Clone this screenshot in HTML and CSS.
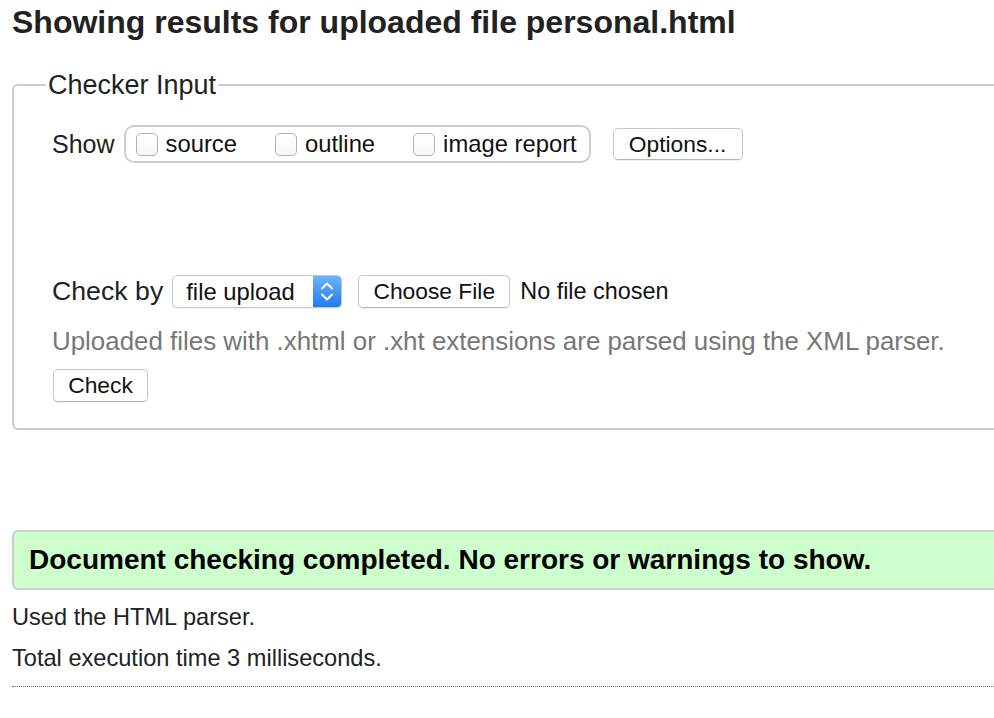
FILE: index.html
```html
<!DOCTYPE html>
<html lang="en">
<head>
<meta charset="utf-8">
<title>Checker results</title>
<link rel="stylesheet" href="styles.css">
</head>
<body>
<div class="page">
  <h1 class="title">Showing results for uploaded file personal.html</h1>

  <fieldset class="checker">
    <legend class="checker-legend">Checker Input</legend>

    <div class="show-row">
      <span class="row-label show-label">Show</span>
      <div class="show-group">
        <label class="opt"><input type="checkbox" class="cb"><span>source</span></label>
        <label class="opt"><input type="checkbox" class="cb"><span>outline</span></label>
        <label class="opt"><input type="checkbox" class="cb"><span>image report</span></label>
      </div>
      <button type="button" class="btn btn-options">Options...</button>
    </div>

    <div class="checkby-row">
      <span class="row-label checkby-label">Check by</span>
      <div class="select">
        <span class="select-text">file upload</span>
        <span class="select-stepper">
          <svg width="28" height="33" viewBox="0 0 28 33" aria-hidden="true">
            <path d="M9 13.5 L14 8.5 L19 13.5" fill="none" stroke="#fff" stroke-width="2" stroke-linecap="round" stroke-linejoin="round"/>
            <path d="M9 19.5 L14 24.5 L19 19.5" fill="none" stroke="#fff" stroke-width="2" stroke-linecap="round" stroke-linejoin="round"/>
          </svg>
        </span>
      </div>
      <button type="button" class="btn btn-file">Choose File</button>
      <span class="file-status">No file chosen</span>
    </div>

    <p class="hint">Uploaded files with .xhtml or .xht extensions are parsed using the XML parser.</p>

    <button type="button" class="btn btn-check">Check</button>
  </fieldset>

  <div class="success">Document checking completed. No errors or warnings to show.</div>

  <p class="stat stat-first">Used the HTML parser.</p>
  <p class="stat">Total execution time 3 milliseconds.</p>

  <hr class="rule">
</div>
</body>
</html>
```

FILE: styles.css
```css
html {
  overflow: hidden;
  background: #fff;
}

body {
  margin: 0;
  padding: 0 0 0 12px;
  font-family: "Liberation Sans", Arial, Helvetica, sans-serif;
  color: #222;
}

.page {
  width: 1020px;
}

.title {
  margin: 0;
  padding-top: 2px;
  font-size: 32px;
  line-height: 40px;
  font-weight: bold;
  color: #222;
}

.checker {
  margin: 28px 0 0 0;
  padding: 0 0 26px 38px;
  border: 2px solid #cdcdcd;
  border-radius: 6px;
  min-width: 0;
}

.checker-legend {
  margin-left: -6px;
  padding: 0 2px;
  font-size: 27px;
  line-height: 30px;
  color: #222;
}

.show-row {
  display: flex;
  align-items: center;
  height: 38px;
  margin-top: 25px;
}

.row-label {
  color: #222;
}

.show-label {
  font-size: 25px;
  margin-right: 9px;
}

.show-group {
  display: flex;
  align-items: center;
  flex-shrink: 0;
  box-sizing: border-box;
  height: 38px;
  width: 467px;
  padding: 0 12px 0 10px;
  border: 2px solid #cdcdcd;
  border-radius: 10px;
}

.opt {
  display: flex;
  align-items: center;
  flex-shrink: 0;
  white-space: nowrap;
  font-size: 23.8px;
  color: #111;
  margin-right: 38px;
}

.opt:last-child {
  margin-right: 0;
}

.cb {
  -webkit-appearance: none;
  appearance: none;
  flex-shrink: 0;
  box-sizing: border-box;
  width: 22px;
  height: 23px;
  margin: 0 8px 0 0;
  border: 1px solid #b1b1b1;
  border-radius: 5px;
  background: linear-gradient(#fff, #f6f6f6);
  box-shadow: inset 0 1px 0 #fff;
}

.btn {
  box-sizing: border-box;
  margin: 0;
  flex-shrink: 0;
  white-space: nowrap;
  font-family: "Liberation Sans", Arial, Helvetica, sans-serif;
  font-size: 22.8px;
  color: #111;
  background: #fff;
  border: 1px solid #c6c6c6;
  border-bottom-color: #b4b4b4;
  border-radius: 5px;
  box-shadow: 0 1px 1px rgba(0, 0, 0, 0.06);
  padding: 0 14px;
  line-height: 1;
}

.btn-options {
  width: 130px;
  height: 32px;
  margin-left: 22px;
}

.checkby-row {
  display: flex;
  align-items: center;
  height: 33px;
  margin-top: 112px;
}

.checkby-label {
  font-size: 26.7px;
  margin-right: 9px;
}

.select {
  display: flex;
  align-items: stretch;
  box-sizing: border-box;
  width: 170px;
  height: 33px;
  border: 1px solid #c6c6c6;
  border-radius: 5px;
  background: #fff;
  overflow: hidden;
  box-shadow: 0 1px 1px rgba(0, 0, 0, 0.06);
}

.select-text {
  flex: 1;
  display: flex;
  align-items: center;
  padding-left: 13px;
  font-size: 23.8px;
  color: #111;
  white-space: nowrap;
}

.select-stepper {
  width: 28px;
  display: flex;
  align-items: center;
  justify-content: center;
  background: linear-gradient(#6db3fb, #1f7cf0);
}

.select-stepper svg {
  display: block;
}

.btn-file {
  width: 152px;
  height: 33px;
  margin-left: 16px;
}

.file-status {
  margin-left: 10px;
  font-size: 23.4px;
  color: #111;
  white-space: nowrap;
}

.hint {
  margin: 18px 0 0 0;
  font-size: 25.9px;
  line-height: 30px;
  color: #777;
}

.btn-check {
  display: block;
  width: 95px;
  height: 33px;
  margin: 13px 0 0 1px;
}

.success {
  box-sizing: border-box;
  height: 60px;
  margin-top: 100px;
  padding-left: 15px;
  display: flex;
  align-items: center;
  background: #ccffcc;
  border: 2px solid #cdcdcd;
  border-radius: 6px;
  font-size: 28px;
  font-weight: bold;
  color: #000;
}

.stat {
  margin: 13px 0 0 0;
  font-size: 23.6px;
  line-height: 28px;
  color: #222;
}

.rule {
  margin: 14px 0 0 0;
  border: 0;
  border-top: 1px dotted #666;
  height: 0;
}
```
